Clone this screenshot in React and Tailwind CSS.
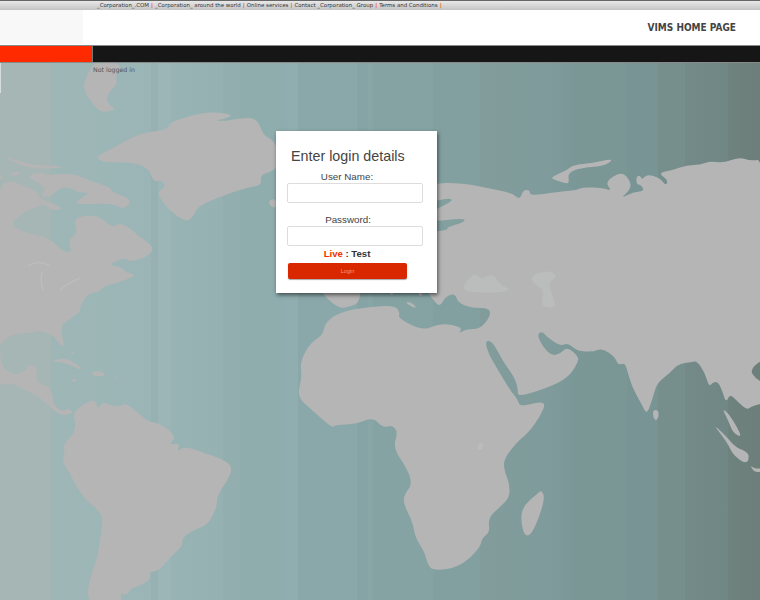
import React from 'react';

const sans = 'font-["Liberation_Sans",Arial,sans-serif]';
const verdana = 'font-["DejaVu_Sans",Verdana,sans-serif]';

const topLinks = ['_Corporation_.COM', '_Corporation_ around the world', 'Online services', 'Contact _Corporation_ Group', 'Terms and Conditions'];

// outlines of the world map, page coordinates
const LAND = [
  // greenland
  '95,157 110,150 130,138 147,132 167,130 170,123 177,120 200,113 220,112 235,116 213,121 226,121 240,118 257,118 263,135 273,140 278,150 278,165 273,171 260,175 262,185 250,187 230,193 207,202 197,208 190,222 177,217 163,203 157,192 165,188 163,180 153,182 150,170 137,163 113,162 103,162',
  // north island
  '83,87 87,75 92,66 97,63 123,63 115,77 118,83 107,95 107,103 117,110 103,112 98,110 88,98',
  // north america
  '-5,187 13,180 20,185 35,190 38,195 42,200 53,203 33,207 13,220 13,227 27,233 50,238 63,252 72,252 68,240 78,233 73,217 97,215 107,223 113,227 122,222 140,237 155,248 147,257 128,262 127,257 107,265 122,267 125,272 138,275 117,283 102,287 100,292 88,293 80,307 80,312 68,320 60,327 65,348 58,343 53,335 40,330 30,333 13,334 0,343 0,353 3,370 17,375 27,370 27,365 38,365 35,383 52,387 53,405 63,412 68,408 74,413 62,416 53,410 43,400 32,393 20,388 12,383 5,385 -5,383',
  // south america
  '73,413 85,403 96,399 97,410 103,402 110,405 120,407 125,403 135,410 148,422 160,423 177,437 168,445 180,443 177,452 185,446 207,454 217,457 232,465 230,477 217,495 217,507 208,525 193,530 182,538 182,547 170,557 160,570 148,573 147,565 152,577 143,585 130,588 128,595 120,593 122,606 88,606 88,583 97,560 102,527 102,513 82,497 68,470 62,462 65,453 63,445 75,432 75,420',
  // arctic islands
  '28,175 40,172 47,175 73,173 93,182 110,187 112,192 133,200 123,210 113,203 72,205 83,197 90,192 78,193 70,187 60,188 50,197 40,197 47,188 33,180',
  '43,202 52,203 63,208 57,211 46,207',
  '3,155 30,165 62,166 62,168 30,169 10,160',
  '10,173 20,171 20,175 11,176',
  '-2,175 2,175 2,180 -2,180',
  // caribbean
  '53,360 67,358 82,368 80,370 67,363 55,362',
  '90,373 98,370 107,375 97,377',
  '72,379 76,379 76,382 72,382',
  '115,375 118,376 117,378',
  '71,352 74,352 75,354 72,354',
  // eurasia and africa
  '430,183 463,183 487,188 512,193 520,200 523,190 530,190 530,196 557,192 577,190 583,187 603,188 612,191 605,182 620,172 628,177 632,188 620,199 633,192 645,191 640,184 637,185 636,177 640,175 642,180 647,174 660,178 666,186 668,180 658,173 673,170 687,165 700,165 710,161 723,163 740,157 750,161 765,159 765,361 760,361 750,370 755,378 765,384 765,403 752,406 747,410 738,402 730,394 726,403 722,390 718,382 713,382 709,387 705,373 697,361 692,362 678,364 670,373 657,383 653,397 647,415 642,405 632,387 627,370 625,363 618,365 615,357 602,348 593,352 577,351 568,343 560,346 547,337 542,331 537,335 543,347 552,356 561,353 567,347 577,355 579,361 568,378 547,388 518,397 518,390 515,378 502,360 493,342 485,340 488,353 498,370 510,390 518,400 520,407 547,400 540,417 528,433 517,442 503,460 505,473 509,482 510,497 500,507 488,518 490,532 482,538 480,548 460,567 433,571 427,563 425,553 415,537 413,523 403,503 405,493 412,485 408,470 393,448 398,432 392,425 383,428 373,417 357,424 335,425 332,428 312,410 297,397 302,377 300,362 310,343 323,335 325,323 338,313 360,308 395,305 400,313 398,318 423,331 440,323 463,327 458,334 466,329 480,329 490,317 490,308 472,308 458,303 455,293 445,297 440,307 433,300 425,288 430,288 430,232 448,230 447,227 465,222 464,218 430,222 430,212 453,201 450,198 430,202',
  // europe below the panel
  '320,288 325,297 340,309 350,306 358,304 362,288',
  '405,302 411,302 417,308 412,307',
  '388,290 394,290 392,297',
  '416,290 423,290 421,298',
  // british isles
  '268,201 276,198 276,208 271,207',
  // madagascar
  '522,507 538,493 542,490 545,500 533,533 525,537 521,523',
  // island arc
  '712,423 727,437 735,447 750,453 747,465 733,455 727,442',
  '722,408 730,415 743,438 733,433 728,420',
  '750,465 755,469 762,468 762,472 754,472',
  '653,410 658,410 659,416 656,421 653,417',
  // novaya zemlya
  '550,178 560,173 567,170 573,165 593,163 610,159 612,161 603,166 580,168 568,173 569,181 568,184 558,181',
];

const LAKES = [
  '463,285 475,272 480,280 493,273 500,285 512,290 495,293 465,292',
  '532,275 550,270 558,277 548,282 552,295 557,308 540,307 545,290 532,283',
  '477,445 483,442 483,449 478,451',
];

// round the corners so the coast is not made of straight bits
const toPath = (points) => {
  const pts = points.split(' ').map((p) => p.split(',').map(Number));
  const mid = (a, b) => [(a[0] + b[0]) / 2, (a[1] + b[1]) / 2];
  const start = mid(pts[pts.length - 1], pts[0]);
  let d = `M${start[0]} ${start[1]}`;
  pts.forEach((p, i) => {
    const m = mid(p, pts[(i + 1) % pts.length]);
    d += `Q${p[0]} ${p[1]} ${m[0]} ${m[1]}`;
  });
  return d + 'Z';
};

const WorldMap = () => (
  <svg viewBox="0 63 760 537" className="absolute inset-0 h-full w-full">
    {LAND.map((shape, i) => (
      <path key={i} d={toPath(shape)} fill="#b5b5b5" />
    ))}
    {LAKES.map((shape, i) => (
      <path key={i} d={toPath(shape)} fill="#babdbb" />
    ))}
    <path d="M28 266Q38 259 50 266M42 272Q40 282 43 290M60 290Q70 282 80 278" fill="none" stroke="#bbbdbc" strokeWidth="1.5" />
    <rect x="0" y="63" width="1" height="30" fill="#d5dcdc" />
  </svg>
);

const LoginBox = () => (
  <form className={`relative ml-[276px] mt-[57px] h-[162px] w-[161px] bg-white pl-[11px] pt-[16px] shadow-[1px_2px_4px_rgba(0,0,0,0.55)] ${sans}`}>
    <h1 className="mb-[5px] ml-[4px] text-[14.3px] leading-[18px] text-[#444]">Enter login details</h1>
    <label className="block w-[120px] text-center text-[9.8px] leading-[13px] text-[#444]">User Name:</label>
    <input className="block h-[20px] w-[136px] rounded-[2px] border border-[#ddd] bg-white" />
    <label className="mt-[10px] block w-[122px] text-center text-[9.8px] leading-[13px] text-[#444]">Password:</label>
    <input type="password" className="block h-[20px] w-[136px] rounded-[2px] border border-[#ddd] bg-white" />
    <div className="mt-[1px] w-[120px] text-center text-[9.6px] font-bold leading-[13px] text-[#333]">
      <span className="text-[#ee3300]">Live</span> : Test
    </div>
    <button type="button" className="ml-[1px] mt-[3px] block h-[16px] w-[119px] rounded-[2px] bg-[#d92800] text-[5.5px] text-[#f09a80] shadow-[0_1px_1px_rgba(0,0,0,0.35)]">
      Login
    </button>
  </form>
);

export default function App() {
  return (
    <div className="flex h-[600px] w-[760px] flex-col overflow-hidden bg-white">
      {/* top link strip */}
      <div className={`flex h-[10px] items-center border-t border-[#666] bg-gradient-to-b from-[#e8e8e8] to-[#c4c4c4] pl-[97px] text-[5.45px] leading-none text-[#333] ${verdana}`}>
        {topLinks.map((link) => (
          <React.Fragment key={link}>
            <span>{link}</span>
            <span className="mx-[2px] font-bold text-[#e85a10]">|</span>
          </React.Fragment>
        ))}
      </div>

      {/* header */}
      <div className="flex h-[35px] items-center justify-between bg-white">
        <div className="h-[34px] w-[83px] self-start bg-[#f8f8f8]" />
        <div className='pr-[24px] font-["DejaVu_Sans_Condensed","DejaVu_Sans",sans-serif] text-[10px] font-bold text-[#444]'>VIMS HOME PAGE</div>
      </div>

      {/* nav bar */}
      <div className="flex h-[18px] border-y border-[#8a8a8a]">
        <div className="w-[92px] bg-[#ff2a00]" />
        <div className="w-[1px] bg-[#777]" />
        <div className="flex-1 bg-[#161616]" />
      </div>

      {/* map page */}
      <main className="relative flex-1 bg-[linear-gradient(90deg,#a5b6b4_0,#a5b6b4_51px,#9eb6b6_51px,#9bb5b6_151px,#97b1b3_151px,#97b1b3_158px,#9cb6b8_158px,#9cb6b8_171px,#98b3b3_171px,#96b1b1_223px,#92aeae_223px,#92aeae_240px,#8fadad_240px,#8fadad_280px,#8eacad_280px,#90aeaf_288px,#90aeaf_298px,#8aa8a9_298px,#8aa8a9_357px,#86a4a5_357px,#86a4a5_368px,#89a6a6_368px,#89a6a6_373px,#85a3a3_373px,#85a3a3_433px,#83a0a0_433px,#83a0a0_480px,#829c9c_480px,#809b9b_543px,#7b9898_573px,#7a9695_590px,#7a9695_627px,#789494_627px,#789494_658px,#768f8d_658px,#768f8d_685px,#738a88_685px,#718786_728px,#6e827e_728px,#6c7f7a_760px)]">
        <WorldMap />
        <p className={`relative ml-[93px] pt-[3px] text-[6.25px] leading-[8px] text-[#555] ${verdana}`}>Not logged in</p>
        <LoginBox />
      </main>
    </div>
  );
}
